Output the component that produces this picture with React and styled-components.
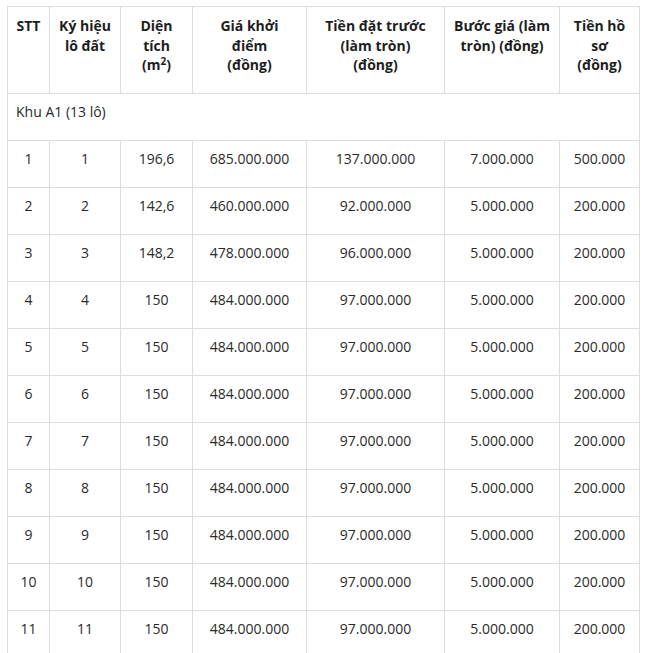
import React from "react";
import styled, { createGlobalStyle } from "styled-components";

const GlobalStyle = createGlobalStyle`
  body {
    margin: 0;
    background: #fff;
    font-family: "Open Sans", "Noto Sans", sans-serif;
  }
`;

const widths = [42, 71, 72, 114, 138, 115, 80];

// header lines broken as in the original layout
const headers = [
  ["STT"],
  ["Ký hiệu", "lô đất"],
  [
    "Diện",
    "tích",
    <>
      (m<sup>2</sup>)
    </>,
  ],
  ["Giá khởi", "điểm", "(đồng)"],
  ["Tiền đặt trước", "(làm tròn)", "(đồng)"],
  ["Bước giá (làm", "tròn) (đồng)"],
  ["Tiền hồ", "sơ", "(đồng)"],
];

const rows = [
  ["1", "1", "196,6", "685.000.000", "137.000.000", "7.000.000", "500.000"],
  ["2", "2", "142,6", "460.000.000", "92.000.000", "5.000.000", "200.000"],
  ["3", "3", "148,2", "478.000.000", "96.000.000", "5.000.000", "200.000"],
  ["4", "4", "150", "484.000.000", "97.000.000", "5.000.000", "200.000"],
  ["5", "5", "150", "484.000.000", "97.000.000", "5.000.000", "200.000"],
  ["6", "6", "150", "484.000.000", "97.000.000", "5.000.000", "200.000"],
  ["7", "7", "150", "484.000.000", "97.000.000", "5.000.000", "200.000"],
  ["8", "8", "150", "484.000.000", "97.000.000", "5.000.000", "200.000"],
  ["9", "9", "150", "484.000.000", "97.000.000", "5.000.000", "200.000"],
  ["10", "10", "150", "484.000.000", "97.000.000", "5.000.000", "200.000"],
  ["11", "11", "150", "484.000.000", "97.000.000", "5.000.000", "200.000"],
];

const App = () => {
  return (
    <>
      <GlobalStyle />
      <Wrap>
        <Table>
          <colgroup>
            {widths.map((w, i) => (
              <col key={i} style={{ width: w }} />
            ))}
          </colgroup>
          <thead>
            <tr>
              {headers.map((lines, i) => (
                <Th key={i}>
                  {lines.map((l, k) => (
                    <Line key={k}>{l}</Line>
                  ))}
                </Th>
              ))}
            </tr>
          </thead>
          <tbody>
            <tr>
              <Td colSpan={7} $left>
                Khu A1 (13 lô)
              </Td>
            </tr>
            {rows.map((r, i) => (
              <tr key={i}>
                {r.map((c, j) => (
                  <Td key={j}>{c}</Td>
                ))}
              </tr>
            ))}
          </tbody>
        </Table>
      </Wrap>
    </>
  );
};

const Wrap = styled.div`
  padding: 6px 6px 0 7px;
`;

const Table = styled.table`
  width: 633px;
  table-layout: fixed;
  border-collapse: collapse;
  color: #222;
  font-size: 14px;
  line-height: 20px;
`;

const Th = styled.th`
  border: 1px solid #dddddd;
  height: 87px;
  box-sizing: border-box;
  padding: 9px 4px 16px;
  font-weight: 700;
  text-align: center;
  vertical-align: top;
  color: #1e1e1e;
  white-space: nowrap;
  sup {
    font-size: 10px;
    line-height: 0;
    vertical-align: 5px;
  }
`;

const Line = styled.div`
  line-height: 19.5px;
`;

const Td = styled.td`
  border: 1px solid #dddddd;
  height: 47px;
  box-sizing: border-box;
  padding: 8px 8px 16px;
  vertical-align: top;
  text-align: ${({ $left }) => ($left ? "left" : "center")};
  color: #2a2a2a;
`;

export default App;
